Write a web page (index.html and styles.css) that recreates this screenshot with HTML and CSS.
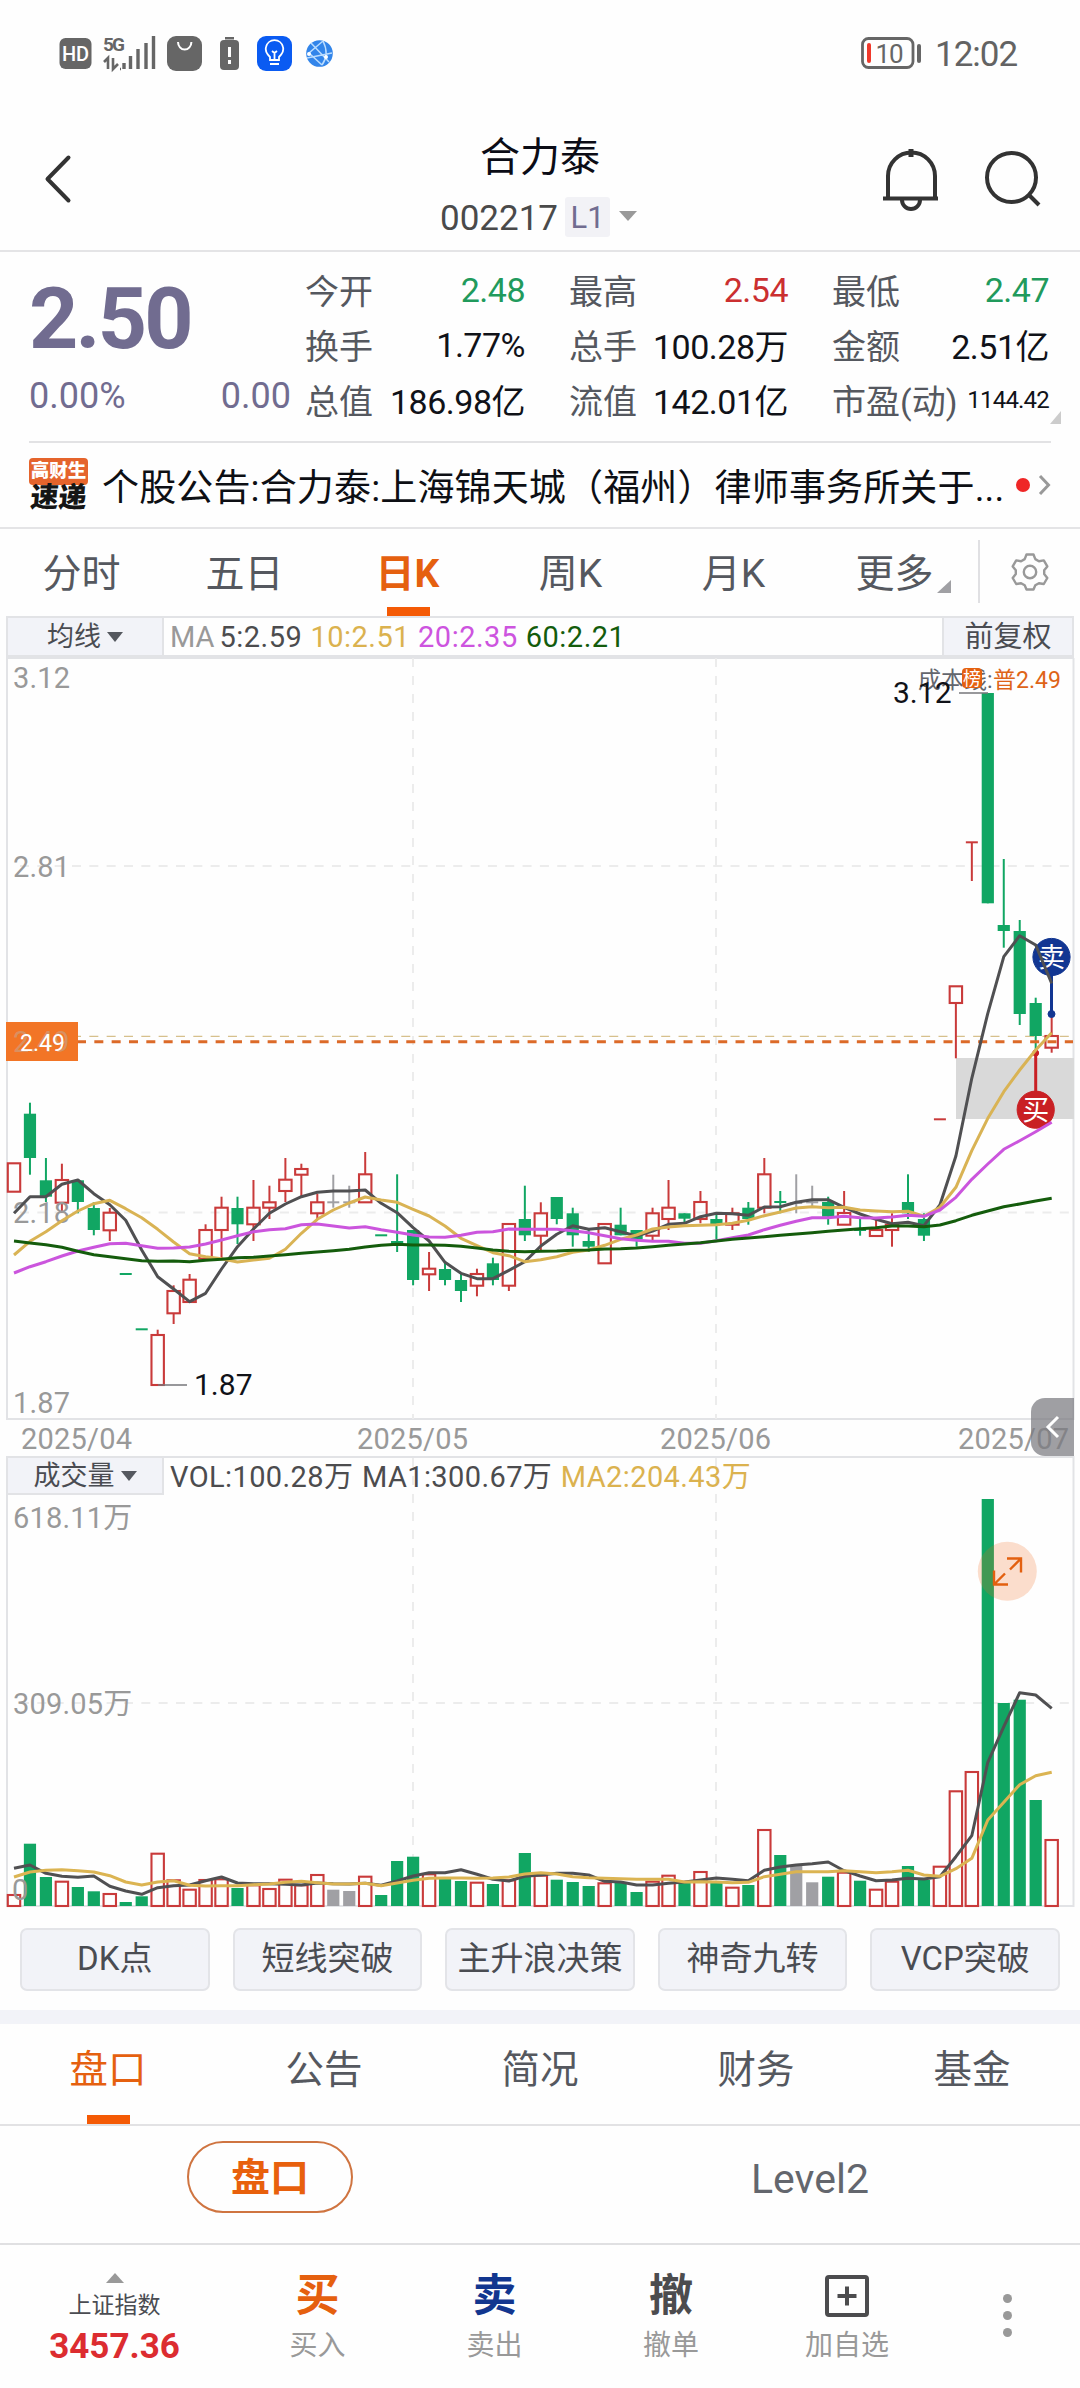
FILE: index.html
```html
<!DOCTYPE html>
<html lang="zh-CN">
<head>
<meta charset="utf-8">
<title>合力泰 002217</title>
<link rel="stylesheet" href="styles.css">
</head>
<body>
<div class="statusbar">
  <svg width="290" height="50" viewBox="50 30 290 50" aria-hidden="true">
    <rect x="59.500" y="38" width="32" height="31" rx="6" fill="#666"/>
    <text x="75.500" y="61" class="st-hd" text-anchor="middle">HD</text>
    <text x="103" y="51" class="st-5g">5G</text>
    <path d="M104 62l4-4v11M113 58v11l5-5M120 69h1" stroke="#666" stroke-width="2.6" fill="none"/>
    <path d="M124 63v6M130.500 56v13M138 49v20M146 43v26M153.500 36v33" stroke="#666" stroke-width="3.400" fill="none"/>
    <rect x="167" y="36" width="35" height="35" rx="9" fill="#666"/>
    <path d="M178 42a6.700 7.500 0 0 0 13.400 0" stroke="#fff" stroke-width="2" fill="none"/>
    <rect x="225" y="37" width="9" height="2.500" fill="#666"/>
    <rect x="220" y="40" width="19" height="30" rx="4" fill="#666"/>
    <path d="M229.500 47v10M229.500 60v4" stroke="#fff" stroke-width="3"/>
    <rect x="257" y="36" width="35" height="35" rx="9" fill="#0a5bf2"/>
    <path d="M270 60v-3c-4-4-5-7-4-10a8.700 8.700 0 0 1 17 0c1 3 0 6-4 10v3zM270 64h9M274.500 59v-6M272 51l2.500 2 2.500-2" stroke="#fff" stroke-width="1.800" fill="none"/>
    <circle cx="319.500" cy="53.500" r="13.300" fill="#3285ea"/>
    <path d="M323 41l-14 12 13 12M323 41c4 8 4 17-1 24M307 58l25-5M311 43l18 19" stroke="#b9dcff" stroke-width="1.500" fill="none"/>
    <circle cx="309" cy="54" r="2" fill="#fff"/><circle cx="326" cy="57" r="2" fill="#fff"/>
  </svg>
  <div class="statusbar__right">
    <svg width="62" height="34" viewBox="861 36 62 34" aria-hidden="true">
      <rect x="863.500" y="38.500" width="50.500" height="29" rx="6" fill="none" stroke="#666" stroke-width="2.800"/>
      <path d="M920 46v15" stroke="#666" stroke-width="4" stroke-linecap="round"/>
      <rect x="868" y="43" width="4" height="20" rx="2" fill="#f0392b"/>
      <text x="890" y="63" class="st-batt" text-anchor="middle">10</text>
    </svg>
    <span class="clock">12:02</span>
  </div>
</div>

<header class="header">
  <svg class="header__back" width="30" height="52" viewBox="0 0 30 52"><path d="M25.500 4.500 4.500 26l21 21.500" fill="none" stroke="#333" stroke-width="4" stroke-linecap="round" stroke-linejoin="round"/></svg>
  <div class="header__title">
    <h1>合力泰</h1>
    <div class="header__code"><span>002217</span><em>L1</em><i></i></div>
  </div>
  <div class="header__actions">
    <svg width="58" height="66" viewBox="883 147 58 66" fill="none" stroke="#333"><path d="M889 198v-22a23.500 23.500 0 0 1 47 0v22" stroke-width="4"/><path d="M884 198.500h55" stroke-width="4"/><path d="M912 149v8" stroke-width="5"/><path d="M903 200a9 9 0 0 0 18 0" stroke-width="4"/></svg>
    <svg width="60" height="60" viewBox="984 149 60 60" fill="none" stroke="#333" stroke-width="4"><circle cx="1012.500" cy="177.500" r="24.500"/><path d="M1030 195l10 10"/></svg>
  </div>
</header>

<section class="quote">
  <div class="quote__main">
    <strong>2.50</strong>
    <div class="quote__change"><span>0.00%</span><span>0.00</span></div>
  </div>
  <dl class="quote__stats">
    <div><dt>今开</dt><dd class="down">2.48</dd></div>
    <div><dt>最高</dt><dd class="up">2.54</dd></div>
    <div><dt>最低</dt><dd class="down">2.47</dd></div>
    <div><dt>换手</dt><dd>1.77%</dd></div>
    <div><dt>总手</dt><dd>100.28万</dd></div>
    <div><dt>金额</dt><dd>2.51亿</dd></div>
    <div><dt>总值</dt><dd>186.98亿</dd></div>
    <div><dt>流值</dt><dd>142.01亿</dd></div>
    <div><dt>市盈(动)</dt><dd class="small">1144.42</dd></div>
  </dl>
  <i class="quote__more"></i>
</section>

<section class="news">
  <div class="news__logo"><b>高财生</b><b>速递</b></div>
  <p>个股公告:合力泰:上海锦天城（福州）律师事务所关于...</p>
  <i class="news__dot"></i>
  <svg width="13" height="22" viewBox="0 0 13 22"><path d="M2 2l8.500 9L2 20" fill="none" stroke="#999" stroke-width="3"/></svg>
</section>

<nav class="periods">
  <a>分时</a><a>五日</a><a class="active">日K</a><a>周K</a><a>月K</a><a class="more">更多</a>
  <span class="periods__gear">
    <svg width="40" height="40" viewBox="-20 -20 40 40" fill="none" stroke="#999" stroke-width="2.400" stroke-linejoin="round"><circle r="6.200"/><path d="M-3.500-17.500h7l1.800 4.600 3.600 2.100 4.900-.8 3.500 6-3.100 3.900v3.800l3.100 3.900-3.500 6-4.900-.8-3.600 2.100-1.800 4.200h-7l-1.800-4.200-3.600-2.100-4.900.8-3.500-6 3.100-3.900v-3.800l-3.100-3.900 3.500-6 4.900.8 3.600-2.100z"/></svg>
  </span>
</nav>

<section class="price">
  <div class="bar">
    <button class="select">均线<i></i></button>
    <p class="legend"><span class="c-grey">MA</span><span>5:2.59</span><span class="c-gold">10:2.51</span><span class="c-pink">20:2.35</span><span class="c-green">60:2.21</span></p>
    <button class="adjust">前复权</button>
  </div>
  <svg class="plot" id="price" width="1080" height="762" viewBox="0 658 1080 762">
    <path class="frame" d="M7 658V1419H1073.500V658z"/>
    <path class="grid" d="M413 658V1419M716 658V1419" stroke-dasharray="9 9"/>
    <path class="grid" d="M20 866H1073M20 1212.500H1073" stroke-dasharray="9 8.330"/>
    <path class="mid" d="M20 1036.300H1073" stroke-dasharray="9 8.330"/>
    <rect x="956" y="1058" width="118" height="61" fill="#d9d9d9"/>
    <g id="candles"></g>
    <path d="M158 1385h29M959 693h29" stroke="#77777b" stroke-width="1.600"/>
    <text class="axis" x="13" y="687.500">3.12</text>
    <text class="axis" x="13" y="877">2.81</text>
    <text class="axis" x="13" y="1223">2.18</text>
    <text class="axis" x="13" y="1413">1.87</text>
    <text class="mark" x="194" y="1395">1.87</text>
    <text class="cost" x="918" y="688">成本线:<tspan class="cost__v" x="993">普2.49</tspan></text>
    <rect x="962" y="668" width="20" height="20" rx="4" fill="#e5600f"/>
    <text class="badge" x="972" y="685" text-anchor="middle">榜</text>
    <text class="mark" x="893" y="703">3.12</text>
    <path d="M78 1041.700H1073" stroke="#dc6a28" stroke-width="3" stroke-dasharray="9 8.330" stroke-dashoffset="1"/>
    <rect x="6" y="1022" width="72" height="39" fill="#f27526"/>
    <text class="tagback" x="13" y="1052">2.49</text>
    <text class="tag" x="20" y="1051">2.49</text>
    <g stroke="#123692" fill="#123692"><path d="M1051.500 975v38" stroke-width="3"/><circle cx="1051.500" cy="1014" r="3.500"/><circle cx="1051.500" cy="957" r="18.600"/></g>
    <g stroke="#c92024" fill="#c92024"><path d="M1035.700 1053v40" stroke-width="3"/><circle cx="1035.700" cy="1053" r="3"/><circle cx="1035.700" cy="1109.700" r="18.600"/></g>
    <text class="trade" x="1051.500" y="967" text-anchor="middle">卖</text>
    <text class="trade" x="1035.700" y="1119.500" text-anchor="middle">买</text>
    <g id="price-lines"></g>
  </svg>
  <div class="dates"><span>2025/04</span><span>2025/05</span><span>2025/06</span><span>2025/07</span></div>
  <div class="drawer"><svg width="16" height="24" viewBox="0 0 16 24"><path d="M13 2 3 12l10 10" fill="none" stroke="#fff" stroke-width="3"/></svg></div>
</section>

<section class="volume">
  <svg class="plot" id="volume" width="1080" height="452" viewBox="0 1456 1080 452">
    <path class="frame" d="M7 1457H1073.500V1906H7z"/>
    <path class="grid" d="M413 1458V1906M716 1458V1906" stroke-dasharray="9 9"/>
    <path class="grid" d="M20 1703H1073" stroke-dasharray="9 8.330"/>
    <g id="bars"></g>
    <text class="axis" x="13" y="1528">618.11万</text>
    <text class="axis" x="13" y="1713.500">309.05万</text>
    <text class="axis" x="12" y="1900">0</text>
    <g id="volume-lines"></g>
    <circle cx="1007.300" cy="1571.300" r="29.500" fill="#f26a1b" fill-opacity=".22"/>
    <path d="M1007 1558.500h14v14M1020.500 1559l-10.500 10.500M1008 1584.500h-14v-14M994.500 1584l10.500-10.500" fill="none" stroke="#e3600f" stroke-width="2.400"/>
  </svg>
  <div class="bar bar--over">
    <button class="select">成交量<i></i></button>
    <p class="legend legend--vol"><span>VOL:100.28万</span><span>MA1:300.67万</span><span class="c-gold">MA2:204.43万</span></p>
  </div>
</section>

<div class="signals"><button>DK点</button><button>短线突破</button><button>主升浪决策</button><button>神奇九转</button><button>VCP突破</button></div>

<nav class="tabs"><a class="active">盘口</a><a>公告</a><a>简况</a><a>财务</a><a>基金</a></nav>
<div class="subtabs"><span><b>盘口</b></span><span class="level">Level2</span></div>

<footer class="dock">
  <div class="dock__index"><i></i><span>上证指数</span><strong>3457.36</strong></div>
  <div class="dock__item buy"><b>买</b><span>买入</span></div>
  <div class="dock__item sell"><b>卖</b><span>卖出</span></div>
  <div class="dock__item"><b>撤</b><span>撤单</span></div>
  <div class="dock__item"><b><svg width="46" height="44" viewBox="0 0 46 44" fill="none" stroke="#4c4c4e" stroke-width="4"><rect x="3" y="3" width="40" height="38" rx="2"/><path d="M23 12.500v19M13.500 22h19"/></svg></b><span>加自选</span></div>
  <div class="dock__more"><i></i><i></i><i></i></div>
</footer>
<script src="chart.js"></script>
</body>
</html>
```
FILE: styles.css
```css
* { box-sizing: border-box; margin: 0; padding: 0; }
body {
  width: 1080px; height: 2388px; overflow: hidden;
  background: #fefefe; color: #4a4c52;
  font-family: Roboto, "Noto Sans CJK SC", sans-serif;
}
svg { display: block; }
button { font: inherit; color: inherit; }
i, em { font-style: normal; }

.statusbar { height: 110px; padding: 30px 59px 0 50px; display: flex; justify-content: space-between; }
.statusbar__right { display: flex; gap: 13px; padding-top: 6px; }
.clock { font-size: 35px; line-height: 38px; color: #636363; letter-spacing: -1px; width: 86px; white-space: nowrap; }
.st-hd { font-size: 20px; font-weight: 500; fill: #fff; }
.st-5g { font-size: 19px; font-weight: 700; fill: #666; letter-spacing: -2px; }
.st-batt { font-size: 26px; fill: #666; letter-spacing: -1px; }

.header { height: 142px; border-bottom: 2px solid #e4e4e6; display: flex; justify-content: space-between; align-items: flex-start; padding: 0 37px 0 43px; }
.header__back { margin-top: 43px; }
.header__title { width: 220px; margin-left: 145px; padding-top: 24px; }
.header h1 { font-size: 40px; line-height: 48px; font-weight: 400; color: #0b0c16; text-align: center; width: 200px; }
.header__code { display: flex; align-items: center; margin-top: 15px; height: 40px; font-size: 35px; color: #4a4a4a; }
.header__code span { padding-top: 2px; }
.header__code em { margin-left: 7px; width: 45px; height: 40px; line-height: 42px; text-align: center; background: #f2f2f6; color: #716c90; font-size: 31px; border-radius: 3px; }
.header__code i { margin: -2px 0 0 9px; border: 9px solid transparent; border-top: 10px solid #999; border-bottom: 0; }
.header__actions { display: flex; gap: 43px; padding-top: 37px; align-items: flex-start; }
.header__actions svg + svg { margin-top: 2px; }

.quote { position: relative; display: flex; margin: 0 29px; height: 191px; border-bottom: 2px solid #e2e2e4; }
.quote__main { width: 262px; color: #716c90; padding-top: 17px; }
.quote__main strong { display: block; font-size: 86px; line-height: 100px; letter-spacing: -2.8px; }
.quote__change { display: flex; justify-content: space-between; font-size: 36px; line-height: 40px; margin-top: 7px; }
.quote__stats { margin-left: 15px; padding-top: 10px; display: grid; grid-template-columns: 219px 218px 216px; column-gap: 45px; grid-auto-rows: 55px; }
.quote__stats div { display: flex; justify-content: space-between; align-items: center; white-space: nowrap; }
.quote__stats dt { font-size: 34px; color: #55585f; margin-left: -1px; }
.quote__stats dd { font-size: 34px; color: #101218; letter-spacing: -.5px; }
.quote__stats .up { color: #cb2f30; }
.quote__stats .down { color: #219a5c; }
.quote__stats .small { font-size: 24px; letter-spacing: -.8px; }
.quote__more { position: absolute; right: -10px; bottom: 17px; border: solid transparent; border-width: 13px 0 0 11px; border-bottom: 13px solid #ccc; border-top: 0; }

.news { height: 86px; border-bottom: 2px solid #e4e4e6; display: flex; align-items: center; padding: 0 29px; }
.news__logo { flex: none; width: 59px; display: flex; flex-direction: column; margin-right: 14px; }
.news__logo b { font-weight: 900; white-space: nowrap; text-align: center; }
.news__logo b:first-child { background: #e5642c; color: #fff; font-size: 18.500px; line-height: 27px; height: 27px; border-radius: 4px; }
.news__logo b:last-child { color: #151515; font-size: 28px; line-height: 30px; transform: skewX(-5deg); margin-top: -2px; }
.news p { flex: none; font-size: 37px; color: #0d0f14; white-space: nowrap; width: 906px; letter-spacing: .15px; }
.news__dot { width: 14px; height: 14px; border-radius: 50%; background: #ef2626; margin: 0 8px; flex: none; }
.news svg { flex: none; }

.periods { height: 87px; display: flex; position: relative; }
.periods a { width: 163px; height: 87px; line-height: 91px; text-align: center; font-size: 39px; color: #55585f; position: relative; white-space: nowrap; }
.periods .active, .tabs .active { color: #e5600f; }
.periods .active { font-weight: 700; }
.periods .active::after, .tabs .active::after { content: ""; position: absolute; bottom: 0; left: 50%; width: 43px; height: 9px; margin-left: -21px; background: #f45a05; }
.periods .more { text-indent: -4px; }
.periods .more::after { content: ""; position: absolute; left: 122px; top: 51px; border-left: 14px solid transparent; border-bottom: 13px solid #a0a0a4; }
.periods__gear { flex: none; height: 63px; margin-top: 11px; border-left: 2px solid #e0e0e3; width: 102px; display: flex; align-items: center; justify-content: center; }

.price { position: relative; }
.plot { width: 1080px; }
.bar { height: 42px; margin: 0 6px; display: flex; align-items: stretch; border: 2px solid #e2e3e6; border-bottom-width: 3px; }
.select { width: 156px; border: 0; border-right: 2px solid #e2e3e6; background: #f2f3f8; font-size: 27px; line-height: 30px; display: flex; align-items: center; justify-content: center; gap: 6px; }
.select i { border: 8px solid transparent; border-top: 10px solid #55585f; border-bottom: 0; }
.legend { flex: 1; padding-left: 6px; display: flex; align-items: center; gap: 8px; font-size: 29px; line-height: 34px; letter-spacing: .5px; white-space: nowrap; color: #4c4c4e; }
.legend .c-grey { margin-right: -3px; letter-spacing: 0; }
.legend--vol { gap: 8.500px; letter-spacing: .4px; }
.adjust { width: 130px; border: 0; border-left: 2px solid #e2e3e6; background: #f2f3f8; font-size: 29px; line-height: 34px; }
.c-grey { color: #999; }
.c-gold { color: #dbb24f; }
.c-pink { color: #cd54df; }
.c-green { color: #145c0c; }
.frame { fill: none; stroke: #e2e3e6; stroke-width: 2; }
.grid { fill: none; stroke: #ececec; stroke-width: 2; }
.mid { stroke: #d6c08c; stroke-width: 1.300; }
.axis { font-size: 29px; fill: #999; letter-spacing: .2px; }
.mark { font-size: 30px; fill: #101218; }
.cost { font-size: 23px; fill: #63666d; }
.cost__v { fill: #de6418; }
.badge { font-size: 18px; fill: #fff; }
.tag { font-size: 23px; fill: #fff; }
.tagback { font-size: 29px; fill: #c9a38a; fill-opacity: .6; }
.trade { font-size: 27px; fill: #fff; }
.dates { height: 36px; padding: 0 9px 0 21px; font-size: 29px; line-height: 38px; letter-spacing: .2px; color: #999; display: grid; grid-template-columns: 336px 303px 298px 112px; white-space: nowrap; }
.drawer { position: absolute; right: 6px; top: 782px; width: 43px; height: 58px; background: rgba(122, 122, 128, .72); border-radius: 14px 0 0 14px; display: flex; align-items: center; padding-left: 14px; }
.volume { position: relative; }
.bar--over { position: absolute; left: 0; top: 0; right: 0; border-color: transparent; }
.bar--over .select { border-bottom: 2px solid #e2e3e6; }

.signals { height: 102px; padding: 20px; display: grid; grid-template-columns: repeat(5, 1fr); gap: 23px; }
.signals button { height: 63px; border: 2px solid #e3e4e8; border-radius: 7px; background: #f2f3f8; font-size: 33px; line-height: 40px; padding-bottom: 1px; white-space: nowrap; }
.tabs { border-top: 14px solid #f2f3f8; border-bottom: 2px solid #e2e2e4; height: 116px; display: grid; grid-template-columns: repeat(5, 216px); }
.tabs a { position: relative; text-align: center; font-size: 38.500px; line-height: 91px; color: #55585f; }
.subtabs { height: 117px; display: grid; grid-template-columns: 1fr 1fr; font-size: 39px; }
.subtabs span { display: flex; justify-content: center; padding-top: 15px; line-height: 76px; color: #63666d; }
.subtabs .level { font-size: 41px; }
.subtabs b { width: 166px; height: 72px; border: 2px solid #cf7440; border-radius: 36px; line-height: 70px; text-align: center; color: #e8600c; }

.dock { border-top: 2px solid #e0e0e2; height: 145px; display: grid; grid-template-columns: 229px 177px 177px 176px 176px 145px; text-align: center; }
.dock__index { display: flex; flex-direction: column; align-items: center; padding-top: 28px; }
.dock__index i { border: 9px solid transparent; border-top: 0; border-bottom: 10px solid #999; }
.dock__index span { font-size: 23px; line-height: 28px; margin-top: 9px; }
.dock__index strong { font-size: 35px; line-height: 40px; margin-top: 7px; color: #dc2c30; }
.dock__item { display: flex; flex-direction: column; align-items: center; padding-top: 26px; color: #4c4c4e; }
.dock__item b { height: 50px; font-size: 44px; line-height: 50px; display: flex; align-items: center; }
.dock__item span { font-size: 28px; line-height: 34px; margin-top: 8px; color: #999; }
.dock .buy b { color: #e5600f; }
.dock .sell b { color: #12368f; }
.dock__more { display: flex; flex-direction: column; gap: 8px; align-items: center; padding-top: 49px; }
.dock__more i { width: 9px; height: 9px; border-radius: 50%; background: #999; }
```
FILE: chart.js
```javascript
const NS = 'http://www.w3.org/2000/svg';
const X0 = 14, STEP = 15.964, BASE = 1906;
const COLORS = { r: '#c93a3a', g: '#11a663', n: '#a0a0a4' };
const x = i => X0 + STEP * i;

function add(parent, tag, attrs) {
  const el = document.createElementNS(NS, tag);
  for (const key in attrs) el.setAttribute(key, attrs[key]);
  parent.appendChild(el);
}

// kind, body top, body bottom, wick top, wick bottom, volume top
const DAYS = [
  ['r',1163.3,1191.7,1163.3,1191.7,1895],['g',1113.7,1158,1102.7,1174.7,1843.7],['g',1180.3,1196.7,1158,1202,1877],
  ['r',1180,1202.7,1163.7,1213,1881.7],['g',1180.3,1202,1180,1213.3,1887],['g',1208,1230,1202.3,1235.3,1891.3],
  ['r',1212.7,1230.3,1208,1241,1894],['g',1274,1274,1274,1274,1902],['g',1329.3,1329.3,1329.3,1329.3,1896.3],
  ['r',1335,1385,1329.7,1385,1853.7],['r',1291,1313.3,1285.3,1324,1880.3],['r',1279.7,1302,1274,1302,1889.7],
  ['r',1230,1258.7,1224.3,1258.7,1880],['r',1207.7,1230,1196.7,1258.7,1879.3],['g',1208,1224.3,1196.7,1244,1888],
  ['r',1207.7,1224.3,1180,1241,1885.3],['r',1202.3,1207.7,1185.7,1219,1889],['r',1179.7,1191,1158,1202,1879.7],
  ['r',1169,1174.7,1163.7,1196.7,1885.3],['r',1202.3,1213.3,1193.7,1219,1875],['n',1202.3,1202.3,1174.7,1207.7,1889.7],
  ['n',1202.3,1202.3,1185.7,1207.7,1891],['r',1174.3,1202.3,1152,1202.3,1876.7],['g',1235.3,1235.3,1235.3,1235.3,1895],
  ['g',1241,1244.5,1174.3,1252,1861],['g',1230,1280,1230,1285.3,1856.7],['r',1268.7,1274.3,1252,1291,1874.3],
  ['g',1269,1280,1263,1285.3,1878.7],['g',1280,1291,1272.7,1302,1881],['r',1274,1285.7,1268.7,1296.3,1882.7],
  ['g',1263.3,1280,1257.7,1285.3,1884],['r',1224,1285.7,1224,1291,1880.3],['g',1219,1235.3,1185.7,1241,1853],
  ['r',1213.3,1235.7,1202.3,1250,1875.7],['g',1197,1219,1197,1224.3,1879.7],['g',1213.3,1235.3,1207.7,1246.7,1882],
  ['g',1241,1246.7,1230,1252,1886],['r',1224,1263.3,1224,1263.3,1883.3],['g',1224.7,1235.3,1207.7,1235.3,1882],
  ['g',1230,1239.3,1230,1246.7,1892],['r',1213.3,1235.7,1207.7,1240,1881.7],['r',1207.7,1219,1180,1230,1875.7],
  ['g',1213.3,1218.7,1213.3,1222.3,1882.7],['r',1202,1219,1191,1223.3,1872],['g',1219,1224.3,1213.3,1239.3,1882],
  ['r',1213.3,1224.7,1207.7,1230,1887.7],['g',1207.7,1219,1202,1224.7,1885],['r',1174.3,1207.7,1158,1213.3,1830],
  ['g',1202,1202,1191,1213.3,1855],['n',1203,1203,1174.3,1213.3,1866],['n',1202.3,1202.3,1185.7,1207.7,1882.3],
  ['g',1202,1216.7,1196.7,1224.7,1876.7],['r',1213,1224.7,1191,1224.7,1872.7],['g',1230,1230,1219,1235.7,1880.7],
  ['r',1230,1236,1219,1236,1889.7],['r',1224.7,1230,1213.3,1246.7,1881.7],['g',1202,1213.3,1174.3,1219,1866],
  ['g',1219,1235.7,1213.3,1241,1880],['r',1119.3,1119.3,1119.3,1119.3,1866.7],['r',986.3,1003,986.3,1058.3,1791.3],
  ['r',842.3,842.3,842.3,881,1772],['g',693,903.3,693,903.3,1499],['g',925,931,859,947.7,1703],
  ['g',931,1014,920,1025,1699.7],['g',1003,1036,997.7,1052.7,1800],['r',1036,1047.7,1016.7,1052.7,1840]
];

const candles = document.getElementById('candles');
const bars = document.getElementById('bars');
DAYS.forEach(([kind, top, bottom, high, low, vol], i) => {
  const c = COLORS[kind], cx = x(i);
  const wick = (a, b) => b > a && add(candles, 'path', { d: `M${cx} ${a}V${b}`, stroke: c, 'stroke-width': 2 });
  if (top === bottom) {
    wick(high, low);
    add(candles, 'path', { d: `M${cx - 6} ${top}h12`, stroke: c, 'stroke-width': 2 });
  } else if (kind === 'r') {
    wick(high, top);
    wick(bottom, low);
    add(candles, 'rect', { x: cx - 6.2, y: top, width: 12.4, height: bottom - top, fill: 'none', stroke: c, 'stroke-width': 2.1 });
  } else {
    wick(high, low);
    add(candles, 'rect', { x: cx - 6.1, y: top, width: 12.2, height: bottom - top, fill: c });
  }
  if (kind === 'r') {
    add(bars, 'rect', { x: cx - 6.2, y: vol, width: 12.4, height: BASE - vol, fill: 'none', stroke: c, 'stroke-width': 2.1 });
  } else {
    add(bars, 'rect', { x: cx - 6.1, y: vol, width: 12.2, height: BASE - vol, fill: c });
  }
});

// Each segment is [y origin, ...samples at three units per pixel].
function line(id, color, ...segments) {
  const ys = segments.flatMap(([origin, ...v]) => v.map(n => origin + n / 3));
  add(document.getElementById(id), 'polyline', {
    points: ys.map((y, i) => `${x(i).toFixed(1)},${y.toFixed(1)}`).join(' '),
    fill: 'none', stroke: color, 'stroke-width': 3, 'stroke-linejoin': 'round'
  });
}

line('price-lines', '#505052',
  [1080,400,350,350,313,300,341,374,421,510,590,627,665,640,567,500,447,400,372,350,337,333],
  [1100,273,270,310,338,383,423,487,520,536,536,511,485,438,403,377,388,383,395,408,393,373,370],
  [1100,350,340,341,346,321,320,307,299,299,322,342,358,371,367,377,315,168],
  [640,1315,1120,950,887,915,1030]);
line('price-lines', '#d9b354',
  [1080,525,484,455,422,393,371,361,386,413,448,486,521,530,536,546,540,535,508,460,418,390],
  [1100,309,291,300,307,328,348,378,415,437,458,467,485,479,470,457,450,436,418,405,387,381,377],
  [1100,376,374,370,361,347,336,324,320,323,322,330,333,335,334,349,322,262,152],
  [640,1435,1355,1290,1230,1178]);
line('price-lines', '#cb55dd',
  [1080,579,560,545,528,513,502,491,490,497,505,504,501,492,480,467,455,449,446,434,432,438],
  [1100,384,380,389,397,405,411,412,406,397,395,387,388,388,388,392,398,407,416,421,424,424,430],
  [1100,430,422,413,405,389,376,364,353,353,349,353,354,351,346,349,330,292,238,192,148,122,95,67]);
line('price-lines', '#145c0c',
  [1080,483,489,494,502,514,524,530,536,542,544,543,545,541,538,533,532,528,524,520,516,512],
  [1100,448,441,436,433,435,435,436,439,444,450,454,455,454,453,451,450,447,446,444,440,436,432],
  [1100,428,423,418,414,410,406,402,398,394,390,386,383,378,378,380,375,362,346,333,320,312,303,295]);
line('volume-lines', '#505052',
  [1800,205,195,220,229,232,228,259,273,283,263,257,255,242,231,249,251,251,253,255,249,251,252,250,256,243,228,218,218,209,223,238,243,229],
  [1480,1185,1180,1180,1185,1204,1206,1215,1215,1210,1206,1200,1194,1198,1202,1171,1161,1155,1151,1146,1172,1188,1202,1200,1195,1197,1190,1130,1067,847,740,638,645,685]);
line('volume-lines', '#dbb452',
  [1800,231,216,211,209,212,216,227,246,255,246,242,256,258,257,257,254,252,247,244,248,252,252,250,257,249,241,235,234,234,235,234,231,222],
  [1480,1178,1182,1190,1193,1195,1196,1198,1198,1198,1206,1205,1206,1208,1207,1190,1183,1175,1175,1175,1172,1175,1178,1175,1171,1185,1189,1166,1135,1020,967,914,887,877]);
```
